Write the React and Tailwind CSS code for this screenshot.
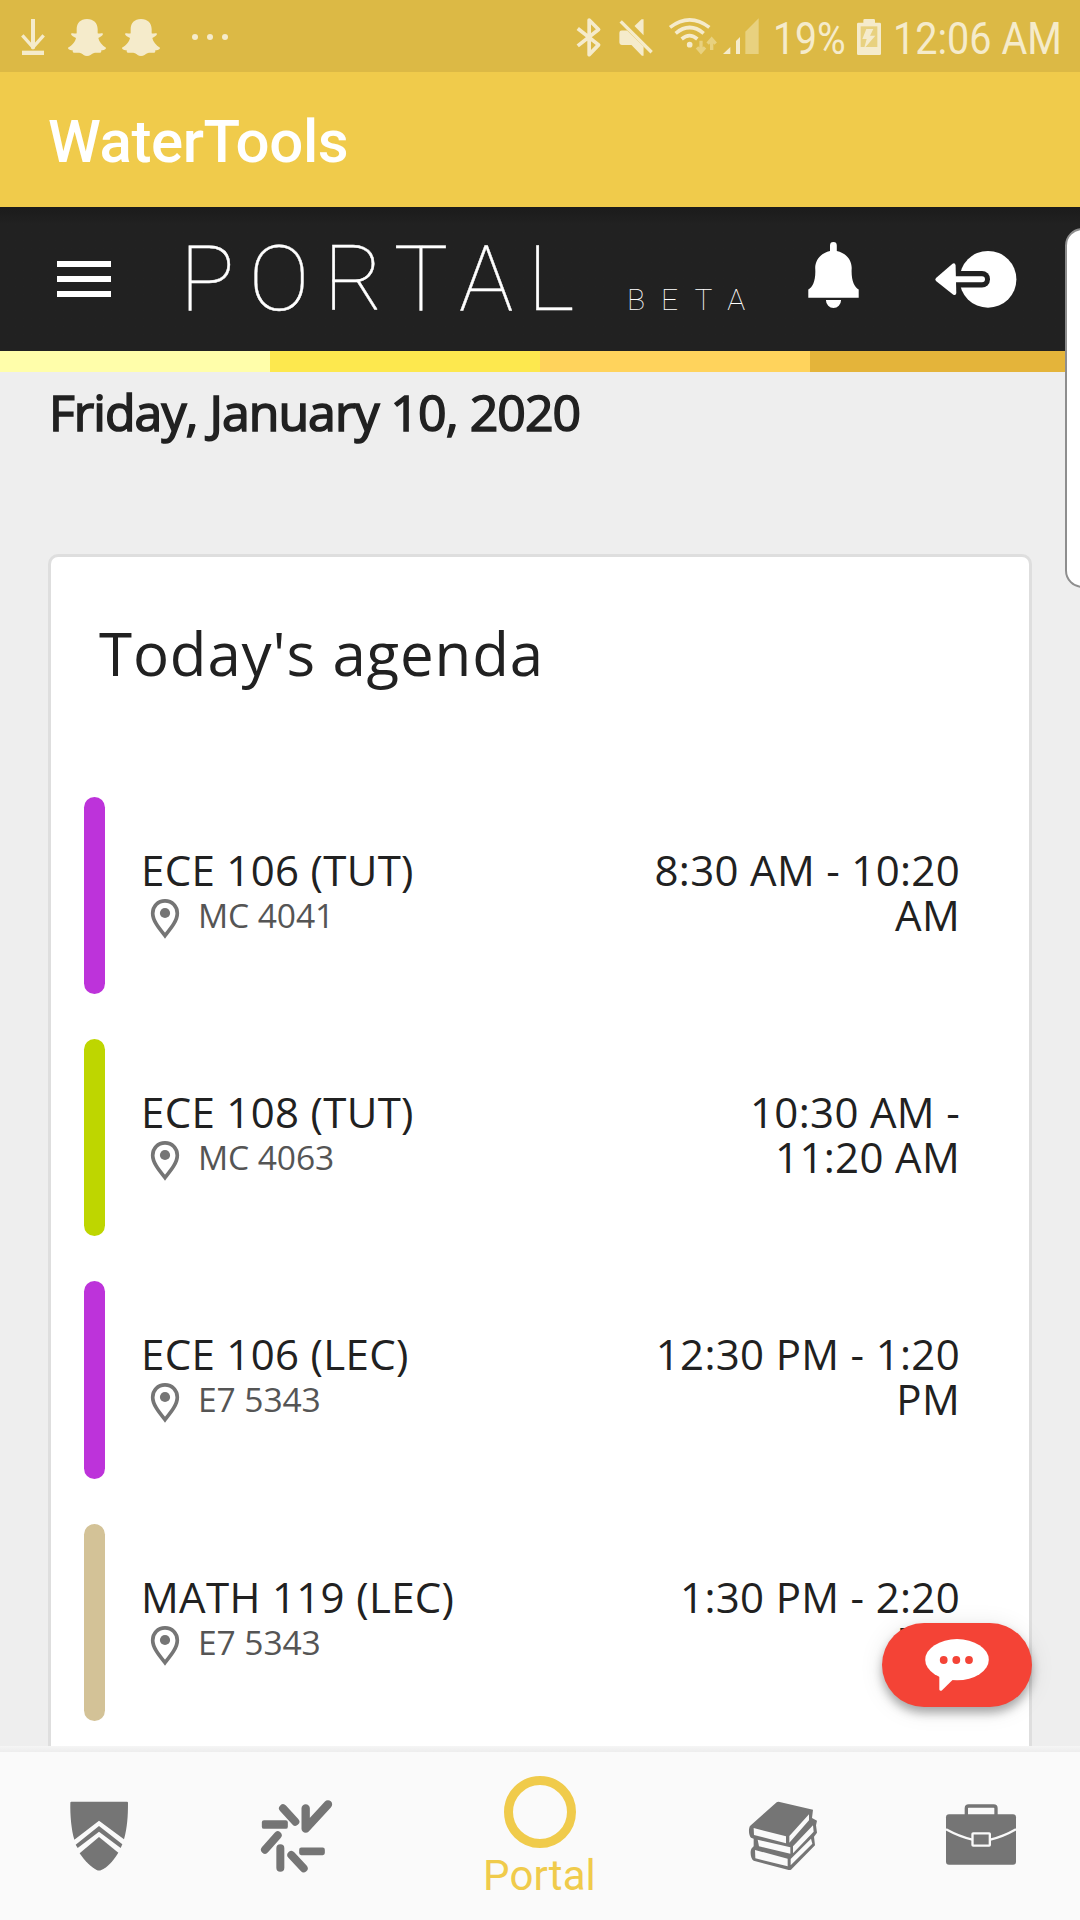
const CREAM = "#f5ebcb";

function DownloadIcon() {
  return (
    <svg viewBox="60 54 78 114" className="h-[38px] w-[26px]" fill="none" stroke={CREAM}>
      <path d="M99 57V146" strokeWidth="12" />
      <path d="M67 106L99 142L131 106" strokeWidth="10" />
      <path d="M66 158.500H132" strokeWidth="13" />
    </svg>
  );
}

function GhostIcon() {
  return (
    <svg viewBox="201 54 120 117" className="h-[39px] w-[40px]" fill={CREAM}>
      <path d="M261 57C241 57 230 70 230 87V100C225 102 218 97 213 101C213 106 220 110 228 114C226 125 217 136 204 143C204 149 213 150 218 151C218 155 218 157 221 158C228 159 236 157 243 160C249 163 252 168 261 168C270 168 274 163 280 160C286 157 294 159 301 158C304 157 304 155 304 151C309 150 318 149 318 143C306 136 297 125 295 114C302 110 309 106 309 101C304 97 298 102 293 100V87C293 70 281 57 261 57Z" />
    </svg>
  );
}

function BluetoothIcon() {
  return (
    <svg viewBox="46 50 80 122" className="h-[41px] w-[27px]" fill="none" stroke={CREAM} strokeWidth="11" strokeLinejoin="round">
      <path d="M54 84L116 133L88 162V59L116 87L54 136" />
    </svg>
  );
}

function MuteIcon() {
  return (
    <svg viewBox="170 50 110 122" className="h-[41px] w-[37px]" fill={CREAM}>
      <path d="M177 97Q177 90 184 90H200L249 138V165H244L213 133H184Q177 133 177 126Z" />
      <path d="M222 77L243 57H249V104Z" />
      <path d="M181 63L273 155" stroke={CREAM} strokeWidth="10" />
    </svg>
  );
}

function WifiIcon() {
  return (
    <svg viewBox="324 48 150 120" className="h-[40px] w-[50px]" fill="none" stroke={CREAM} strokeWidth="11">
      <path d="M330 82Q389 37 448 82M347 100Q389 65 431 100M365 117Q389 97 412 117" />
      <circle cx="389" cy="134" r="8.500" fill={CREAM} stroke="none" />
      <g stroke="#e8d17f" strokeWidth="10">
        <path d="M423 122V155M411 142L423 156L435 142M455 150V118M443 131L455 117L467 131" />
      </g>
    </svg>
  );
}

function SignalIcon() {
  return (
    <svg viewBox="487 50 114 114" className="h-[38px] w-[38px]" fill={CREAM}>
      <path d="M490 161L512 140V161ZM529 122L541 110V161H529Z" />
      <path d="M557 94L597 54V161H557Z" fill="#e8d17f" />
    </svg>
  );
}

function BatteryIcon() {
  return (
    <svg viewBox="888 54 78 114" className="h-[38px] w-[26px]" fill={CREAM}>
      <path d="M891 72Q891 68 895 68H910V61Q910 57 914 57H941Q945 57 945 61V68H959Q963 68 963 72V161Q963 165 959 165H895Q891 165 891 161Z" />
      <path d="M902 79H952V141H902Z" fill="#e8d17f" />
      <path d="M919 87H940L930 107H946L912 146L920 117H907Z" />
    </svg>
  );
}

function BellIcon() {
  return (
    <svg viewBox="806 240 56 70" className="h-[70px] w-[56px]" fill="#fff">
      <path d="M830 251V245.500a3.400 3.400 0 0 1 6.800 0V251C846 253 851.700 260 851.700 268C851 280 854 287 858.700 289.500V297.700H808.300V289.500C813 287 816 280 815.200 268C815.200 260 821 253 830 251ZM826 300H841V300.500A7.500 7.500 0 0 1 826 300.500Z" />
    </svg>
  );
}

function LogoutIcon() {
  return (
    <svg viewBox="934 248 84 62" className="h-[62px] w-[84px]" fill="#fff">
      <circle cx="988" cy="279.300" r="28.400" />
      <rect x="950" y="271" width="40" height="16.500" rx="8" fill="#212121" />
      <rect x="953" y="276.300" width="32" height="6" rx="3" />
      <path d="M936 278L952.500 263.700Q955.300 262.500 955.600 265.500L956.300 293Q956 296 953 294.500L936 281Q934.500 279.500 936 278Z" />
    </svg>
  );
}

function PinIcon() {
  return (
    <svg viewBox="150 898 30 42" className="h-[42px] w-[30px]" fill="none" stroke="#757575" strokeWidth="3.700">
      <path d="M165 900.900C157.800 900.900 152.700 906.300 152.700 913.200C152.700 920.500 158.500 927.500 165 935.700C171.500 927.500 177.300 920.500 177.300 913.200C177.300 906.300 172.200 900.900 165 900.900Z" />
      <circle cx="165" cy="913" r="5.100" fill="#757575" stroke="none" />
    </svg>
  );
}

function ChatIcon() {
  return (
    <svg viewBox="925 1638 64 54" className="h-[54px] w-[64px]" fill="#fff">
      <ellipse cx="957" cy="1659.700" rx="31.800" ry="20.600" />
      <path d="M939.300 1674V1689.500Q939.800 1691.500 941.800 1690.500L953 1679.500Z" />
      <g fill="#f44336">
        <circle cx="943.700" cy="1660" r="3.900" />
        <circle cx="956.300" cy="1660" r="3.900" />
        <circle cx="969" cy="1660" r="3.900" />
      </g>
    </svg>
  );
}

function ShieldIcon() {
  return (
    <svg viewBox="87 180 180 216" className="h-[72px] w-[60px]" fill="#757575">
      <path d="M91 188Q91 185 94 185H261Q264 185 264 188C264 228 262 262 252 298L177 242L103 299C94 268 90 226 91 188Z" />
      <path d="M177 258L247 313L242 324L177 275L113 324L107 314Z" />
      <path d="M177 291L235 338C218 366 200 383 184 390Q177 393 170 390C154 382 134 363 119 340Z" />
    </svg>
  );
}

function BurstIcon() {
  return (
    <svg viewBox="660 177 222 222" className="h-[74px] w-[74px]" fill="none" stroke="#757575" strokeWidth="24" strokeLinecap="round" strokeLinejoin="round">
      <path d="M729 205L766 245M713 286L675 329M721 325V383M754 345L791 385" />
      <path d="M797 205V266L864 193" strokeWidth="25" />
      <rect x="670" y="245" width="69" height="17" rx="2" strokeWidth="9" fill="#757575" />
      <rect x="782" y="327" width="68" height="14" rx="2" strokeWidth="9" fill="#757575" />
    </svg>
  );
}

function BooksIcon() {
  return (
    <svg viewBox="81 90 216 216" className="h-[72px] w-[72px]" fill="#757575">
      <path d="M170 97Q174 94 179 96L279 119L276 144L291 152L288 166L291 188L282 200L285 226L213 299Q211 301 206 300L101 272C91 266 89 240 96 234L101 229V206L93 203C86 196 85 177 90 168Z" />
      <g fill="#fafafa">
        <path d="M101 174L198 199V220L102 195ZM208 198L267 133V151L208 218Z" />
        <path d="M113 209L211 232V251L117 229ZM219 229L279 166L281 185L219 250Z" />
        <path d="M105 240L203 266V289L106 265ZM212 267L273 206L277 221L212 286Z" />
      </g>
    </svg>
  );
}

function BriefcaseIcon() {
  return (
    <svg viewBox="675 98 216 189" className="h-[63px] w-[72px]" fill="none">
      <rect x="678" y="132" width="210" height="151" rx="9" fill="#757575" />
      <path d="M739 134V114Q739 107 746 107H821Q828 107 828 114V134" stroke="#757575" strokeWidth="10" />
      <path d="M678 177Q718 199 757 208M811 208Q850 199 888 177" stroke="#fafafa" strokeWidth="7" />
      <rect x="757.500" y="189" width="52" height="37" rx="2" stroke="#fafafa" strokeWidth="7" />
    </svg>
  );
}

const agenda = [
  { title: "ECE 106 (TUT)", room: "MC 4041", time: ["8:30 AM - 10:20", "AM"], bar: "bg-[#bd33da]" },
  { title: "ECE 108 (TUT)", room: "MC 4063", time: ["10:30 AM -", "11:20 AM"], bar: "bg-[#bed600]" },
  { title: "ECE 106 (LEC)", room: "E7 5343", time: ["12:30 PM - 1:20", "PM"], bar: "bg-[#bd33da]" },
  { title: "MATH 119 (LEC)", room: "E7 5343", time: ["1:30 PM - 2:20", "PM"], bar: "bg-[#d3c297]" },
];

function StatusBar() {
  return (
    <div className="flex h-[72px] shrink-0 items-start bg-[#dcb945] font-['Roboto'] text-[45px] leading-[53px] text-[#f5ebcb]">
      <div className="mt-[18px] ml-[20px]"><DownloadIcon /></div>
      <div className="mt-[18px] ml-[21px]"><GhostIcon /></div>
      <div className="mt-[18px] ml-[14px]"><GhostIcon /></div>
      <div className="mt-[34px] ml-[31px] flex gap-[9px]">
        <span className="size-[6px] rounded-full bg-[#f5ebcb]" />
        <span className="size-[6px] rounded-full bg-[#f5ebcb]" />
        <span className="size-[6px] rounded-full bg-[#f5ebcb]" />
      </div>
      <div className="ml-auto flex w-[505px]">
        <div className="mt-[17px]"><BluetoothIcon /></div>
        <div className="mt-[17px] ml-[15px]"><MuteIcon /></div>
        <div className="mt-[16px] ml-[14px]"><WifiIcon /></div>
        <div className="mt-[17px] ml-[4px]"><SignalIcon /></div>
        <div className="mt-[12px] ml-[13px] w-[83px] origin-left scale-x-[0.87] whitespace-nowrap">19%</div>
        <div className="mt-[18px]"><BatteryIcon /></div>
        <div className="mt-[12px] ml-[11px] origin-left scale-x-[0.88] whitespace-nowrap">12:06 AM</div>
      </div>
    </div>
  );
}

function AgendaRow({ title, room, time, bar }) {
  return (
    <div className="flex h-[197.200px] shrink-0">
      <div className={"w-[21px] shrink-0 rounded-full " + bar} />
      <div className="ml-[36px] pt-[44px]">
        <div className="text-[42px] leading-[57px] tracking-[0.320px] whitespace-nowrap">{title}</div>
        <div className="flex items-start pl-[9px]">
          <PinIcon />
          <div className="-mt-[6px] ml-[18px] text-[33.600px] leading-[46px] tracking-[-0.100px] whitespace-nowrap text-[#555]">{room}</div>
        </div>
      </div>
      <div className="ml-auto pt-[50px] text-right text-[42px] leading-[45px] tracking-[0.320px] whitespace-nowrap">
        {time.map((line) => <div key={line}>{line}</div>)}
      </div>
    </div>
  );
}

export default function App() {
  return (
    <div className="relative flex h-[1920px] w-[1080px] flex-col overflow-hidden bg-[#eee] font-['Open_Sans',sans-serif] text-[#212121]">
      <StatusBar />
      <div className="flex h-[135px] shrink-0 items-center bg-[#f0cb4b] px-[48px] font-['Roboto'] text-[60px] font-medium tracking-[-0.400px] text-white">
        <h1 className="mt-[5px]">WaterTools</h1>
      </div>
      <header className="flex h-[144px] shrink-0 bg-[#212121] bg-linear-to-b from-[#1b1b1b] from-0% to-[#212121] to-[12%] font-['Roboto'] text-white">
        <div className="mt-[54px] ml-[57px] flex h-[36px] w-[54px] flex-col justify-between">
          <span className="h-[6px] bg-white" />
          <span className="h-[6px] bg-white" />
          <span className="h-[6px] bg-white" />
        </div>
        <div className="ml-[69px] flex w-[620px] items-baseline font-thin whitespace-nowrap">
          <span className="w-[447px] text-[91px] leading-[144px] tracking-[14.200px] [-webkit-text-stroke:0.4px_white]">PORTAL</span>
          <span className="text-[30px] tracking-[16px]">BETA</span>
        </div>
        <div className="mt-[33px] ml-[6px]"><BellIcon /></div>
        <div className="mt-[41px] ml-[72px]"><LogoutIcon /></div>
      </header>
      <div className="grid h-[21px] shrink-0 grid-cols-4">
        <div className="bg-[#fffeaa]" />
        <div className="bg-[#fde84e]" />
        <div className="bg-[#ffd35c]" />
        <div className="bg-[#e4b43a]" />
      </div>
      <main className="flex min-h-0 flex-1 flex-col px-[48px]">
        <div className="mt-[6px] h-[176px] pl-px text-[50px] leading-[68px] font-normal tracking-[-0.970px] whitespace-nowrap [-webkit-text-stroke:1.6px_#212121]">Friday, January 10, 2020</div>
        <section className="flex min-h-0 flex-1 flex-col overflow-hidden rounded-t-[10px] border-[3px] border-b-0 border-[#dedede] bg-white">
          <h2 className="mt-[55px] ml-[48px] h-[185px] shrink-0 text-[60px] leading-[82px] tracking-[0.850px]">Today's agenda</h2>
          <div className="flex flex-col gap-[45px] pr-[69px] pl-[33px]">
            {agenda.map((item, i) => <AgendaRow key={i} {...item} />)}
          </div>
        </section>
      </main>
      <div className="h-[6px] shrink-0 bg-linear-to-b from-[#f5f5f5] to-[#ededed]" />
      <nav className="flex h-[168px] shrink-0 bg-[#fafafa]">
        <div className="flex w-[198px] justify-center pt-[48px]"><ShieldIcon /></div>
        <div className="flex w-[198px] justify-center pt-[47px]"><BurstIcon /></div>
        <div className="flex w-[288px] flex-col items-center pt-[24px]">
          <div className="size-[72px] shrink-0 rounded-full border-[9px] border-[#f0cb4b]" />
          <div className="mt-[3px] -ml-px font-['Roboto'] text-[42px] leading-[49px] tracking-[0.100px] text-[#f0cb4b]">Portal</div>
        </div>
        <div className="flex w-[198px] justify-center pt-[48px]"><BooksIcon /></div>
        <div className="flex w-[198px] justify-center pt-[51px]"><BriefcaseIcon /></div>
      </nav>
      <button className="absolute top-[1623px] left-[882px] flex h-[84px] w-[150px] justify-center rounded-full bg-[#f44336] pt-[15px] shadow-[0_6px_10px_rgba(0,0,0,0.3),0_3px_24px_rgba(0,0,0,0.1)]">
        <ChatIcon />
      </button>
      <div className="absolute top-[228px] -right-[20px] h-[360px] w-[35px] rounded-[20px] border-2 border-[#8e8e8e] bg-white" />
    </div>
  );
}
